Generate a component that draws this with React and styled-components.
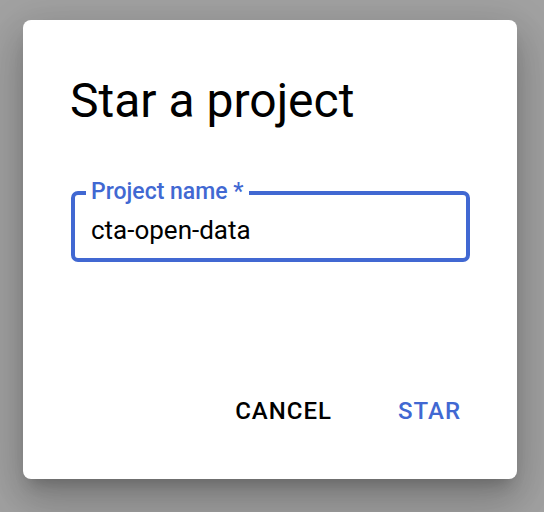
import React from "react";
import styled, { createGlobalStyle } from "styled-components";

const Global = createGlobalStyle`
  html, body { margin: 0; padding: 0; }
  body {
    background: #a2a2a2;
    font-family: Roboto, "Liberation Sans", sans-serif;
    -webkit-font-smoothing: antialiased;
  }
`;

const Backdrop = styled.div`
  width: 544px;
  height: 512px;
  box-sizing: border-box;
  padding: 20px 27px 33px 23px;
  background: #a2a2a2;
  display: flex;
`;

const Dialog = styled.div`
  flex: 1;
  background: #fff;
  border-radius: 8px;
  display: flex;
  flex-direction: column;
  box-shadow: 0 11px 15px -7px rgba(0,0,0,0.2), 0 24px 38px 3px rgba(0,0,0,0.14), 0 9px 46px 8px rgba(0,0,0,0.12);
`;

const Title = styled.h2`
  margin: 57px 0 0 47px;
  font-size: 48px;
  line-height: 1;
  font-weight: 400;
  color: #000;
`;

const Field = styled.div`
  position: relative;
  margin: 66px 47px 0 48px;
  height: 71px;
  box-sizing: border-box;
  border: 4px solid #4168d2;
  border-radius: 7px;
  display: flex;
  align-items: center;
  padding: 6px 0 0 16px;
`;

const Label = styled.label`
  position: absolute;
  left: 11px;
  top: -17px;
  padding: 0 5px;
  background: #fff;
  color: #4168d2;
  font-size: 23px;
  line-height: 28px;
  font-weight: 500;
`;

const Value = styled.span`
  font-size: 26px;
  color: #000;
  line-height: 1;
`;

const Actions = styled.div`
  margin-top: auto;
  display: flex;
  justify-content: flex-end;
  align-items: center;
  gap: 66px;
  padding: 0 56px 56px 0;
`;

const Button = styled.button`
  border: none;
  background: none;
  padding: 0;
  font-family: Roboto, "Liberation Sans", sans-serif;
  font-size: 24px;
  font-weight: 500;
  letter-spacing: 1px;
  line-height: 1;
  text-transform: uppercase;
  color: ${(p) => (p.$primary ? "#4168d2" : "#000")};
  cursor: pointer;
`;

export default function App() {
  return (
    <>
      <Global />
      <Backdrop>
        <Dialog>
          <Title>Star a project</Title>
          <Field>
            <Label>Project name *</Label>
            <Value>cta-open-data</Value>
          </Field>
          <Actions>
            <Button>Cancel</Button>
            <Button $primary>Star</Button>
          </Actions>
        </Dialog>
      </Backdrop>
    </>
  );
}
